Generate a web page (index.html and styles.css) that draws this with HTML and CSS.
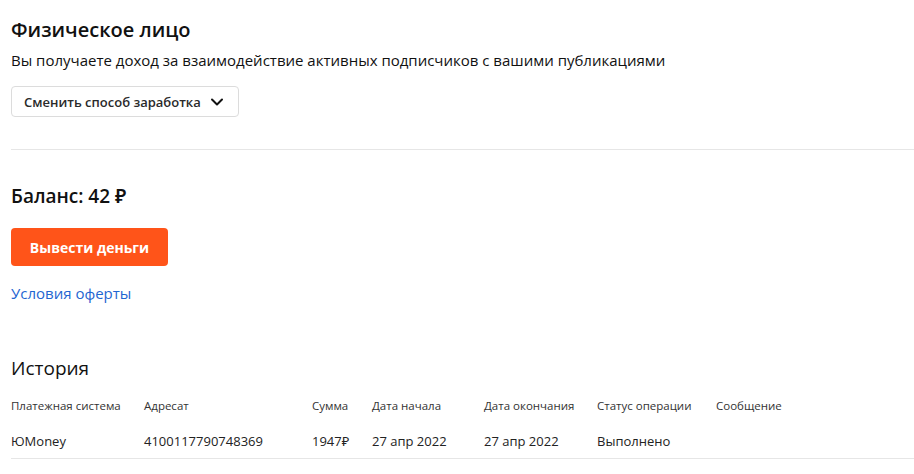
FILE: index.html
```html
<!DOCTYPE html>
<html lang="ru">
  <head>
    <meta charset="UTF-8" />
    <meta name="viewport" content="width=device-width, initial-scale=1.0" />
    <title>Монетизация</title>
    <link rel="stylesheet" href="styles.css">
  </head>
  <body>
    <div class="page">
      <section class="mode">
        <h1 class="mode-title">Физическое лицо</h1>
        <p class="mode-text">Вы получаете доход за взаимодействие активных подписчиков с вашими публикациями</p>
        <button class="switch-button" type="button">
          Сменить способ заработка
          <svg class="chevron" width="14" height="14" viewBox="0 0 14 14">
            <path d="M2 4.5 L7 9.5 L12 4.5" fill="none" stroke="#111" stroke-width="2" stroke-linecap="round" stroke-linejoin="round" />
          </svg>
        </button>
      </section>

      <section class="balance">
        <h2 class="balance-title">Баланс: 42 ₽</h2>
        <button class="withdraw-button" type="button">Вывести деньги</button>
        <a class="offer-link" href="#">Условия оферты</a>
      </section>

      <section class="history">
        <h2 class="history-title">История</h2>
        <table class="history-table">
          <colgroup>
            <col style="width: 133px" />
            <col style="width: 168px" />
            <col style="width: 60px" />
            <col style="width: 112px" />
            <col style="width: 113px" />
            <col style="width: 119px" />
            <col />
          </colgroup>
          <thead>
            <tr>
              <th>Платежная система</th>
              <th>Адресат</th>
              <th>Сумма</th>
              <th>Дата начала</th>
              <th>Дата окончания</th>
              <th>Статус операции</th>
              <th>Сообщение</th>
            </tr>
          </thead>
          <tbody>
            <tr>
              <td>ЮMoney</td>
              <td>4100117790748369</td>
              <td>1947₽</td>
              <td>27 апр 2022</td>
              <td>27 апр 2022</td>
              <td>Выполнено</td>
              <td></td>
            </tr>
          </tbody>
        </table>
      </section>
    </div>
  </body>
</html>
```

FILE: styles.css
```css
body {
  margin: 0;
  background: #fff;
  font-family: "Open Sans", "Noto Sans", Arial, sans-serif;
  color: #111;
}
.page {
  padding: 15px 0 0 11px;
}
.mode {
  padding-bottom: 32px;
  border-bottom: 1px solid #e6e6e6;
}
.mode-title {
  margin: 0;
  font-size: 20px;
  font-weight: 600;
  line-height: 30px;
}
.mode-text {
  margin: 5px 0 0;
  font-size: 15px;
  line-height: 20px;
}
.switch-button {
  display: flex;
  align-items: center;
  gap: 9px;
  margin-top: 16px;
  height: 31px;
  padding: 0 14px 0 12px;
  background: #fff;
  border: 1px solid #dcdcdc;
  border-radius: 4px;
  font-family: inherit;
  font-size: 13px;
  font-weight: 600;
  color: #2a2a2a;
}
.balance {
  padding-top: 33px;
}
.balance-title {
  margin: 0;
  font-size: 19px;
  font-weight: 600;
  line-height: 26px;
}
.withdraw-button {
  display: block;
  margin-top: 19px;
  width: 157px;
  height: 38px;
  background: #ff5419;
  color: #fff;
  border: none;
  border-radius: 4px;
  font-family: inherit;
  font-size: 14px;
  font-weight: 700;
}
.offer-link {
  display: block;
  margin-top: 17px;
  font-size: 15px;
  line-height: 20px;
  color: #1f66d1;
  text-decoration: none;
}
.history {
  padding-top: 51px;
}
.history-title {
  margin: 0;
  font-size: 19px;
  font-weight: 400;
  line-height: 28px;
}
.history-table {
  margin-top: 16px;
  border-collapse: collapse;
  table-layout: fixed;
  width: 903px;
}
.history-table th {
  text-align: left;
  font-size: 11.5px;
  line-height: 16px;
  font-weight: 400;
  color: #333;
  padding: 0 0 9px;
}
.history-table td {
  font-size: 13px;
  line-height: 18px;
  padding: 9px 0 8px;
  border-bottom: 1px solid #e6e6e6;
  color: #222;
}
```
